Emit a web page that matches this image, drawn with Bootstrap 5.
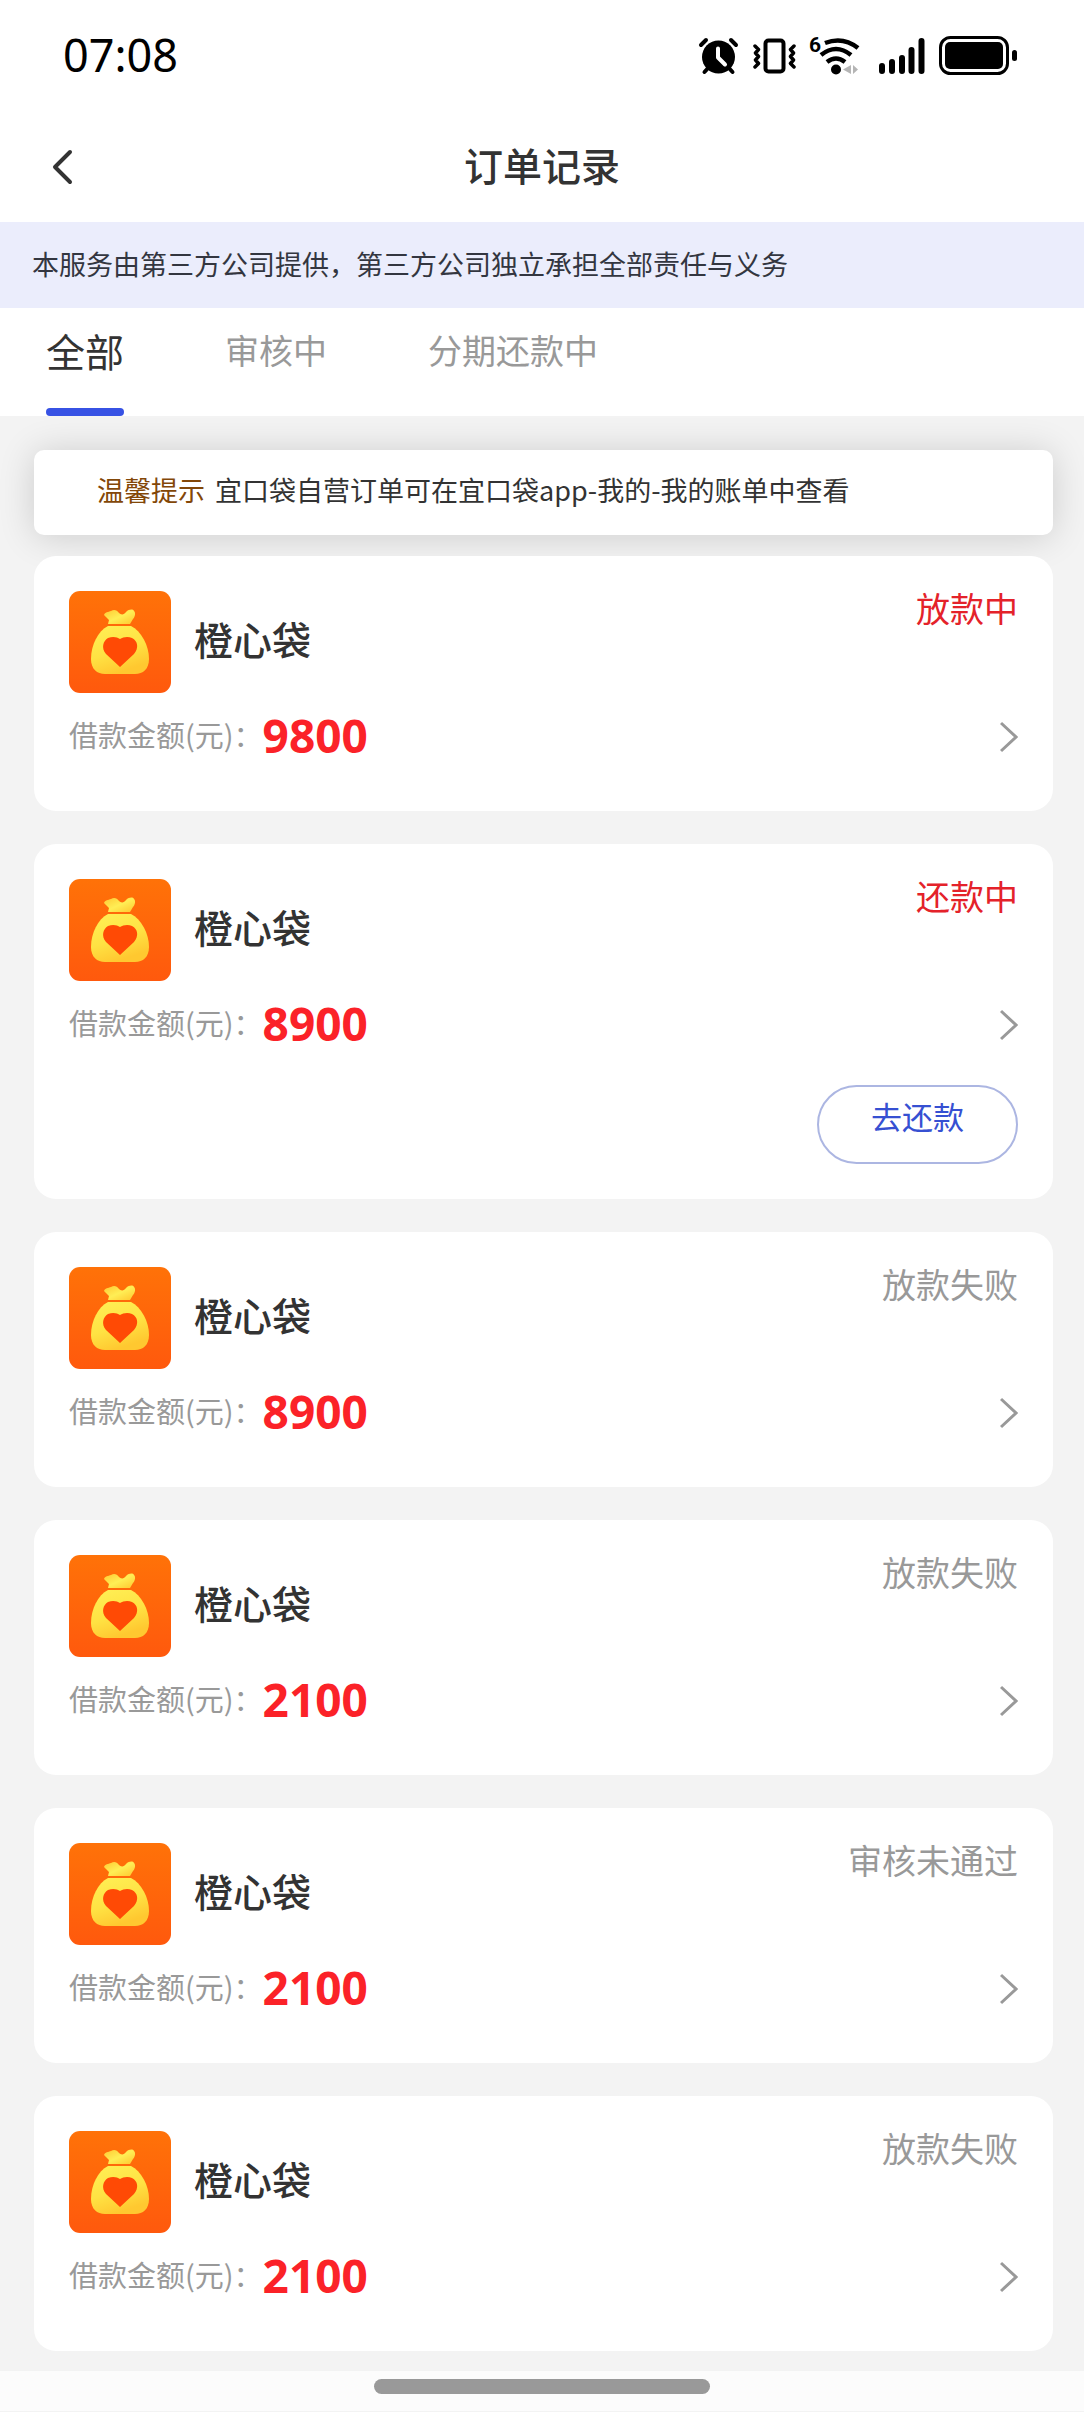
<!DOCTYPE html>
<html lang="zh-CN">
<head>
<meta charset="utf-8">
<meta name="viewport" content="width=device-width, initial-scale=1">
<title>订单记录</title>
<link rel="stylesheet" href="https://cdn.jsdelivr.net/npm/bootstrap@5.3.0/dist/css/bootstrap.min.css">
<style>
  body {
    background: #f3f3f3;
    color: #333;
    font-family: "Noto Sans CJK SC", sans-serif;
    font-size: 27px;
    line-height: 36px;
  }
  .status-bar { height: 112px; padding: 0 67px 2px 63px; color: #000; }
  .status-bar svg { height: 42px; overflow: visible; }
  .status-icons { gap: 12px; }
  .clock { font-family: "Noto Sans", sans-serif; font-size: 45px; line-height: 46px; }
  .title-bar { height: 110px; padding: 0 40px; }
  .title-bar h1 { font-size: 39px; line-height: 52px; font-weight: 500; padding-bottom: 6px; }
  .side-slot { width: 48px; height: 48px; }
  .provider-note { background: #ebedfc; color: #333640; padding: 24px 32px 26px; }
  .order-tabs { height: 108px; padding: 0 46px; gap: 101px; }
  .order-tabs .nav-link {
    padding: 0 0 16px;
    color: #999;
    font-size: 34px;
    line-height: 84px;
    border-bottom: 8px solid transparent;
  }
  .order-tabs .nav-link.active { color: #333; font-size: 39px; position: relative; }
  .order-tabs .nav-link.active::after {
    content: "";
    position: absolute;
    left: 0;
    right: 0;
    bottom: -8px;
    height: 8px;
    border-radius: 4px;
    background: #3752e4;
  }
  .page-body { padding: 34px 31px 20px 34px; }
  .tip-box {
    border-radius: 10px;
    padding: 22px 63px 27px;
    margin-bottom: 21px;
    box-shadow: 0 2px 36px rgba(0, 0, 0, .16);
  }
  .tip-label { color: #834708; margin-right: 10px; }
  .order-list { gap: 33px; }
  .order-card { border: 0; border-radius: 22px; padding: 35px; color: #333; }
  .app-logo { width: 102px; height: 102px; }
  .app-name { font-size: 39px; line-height: 94px; font-weight: 500; margin-left: 23px; }
  .state { font-size: 34px; line-height: 33px; color: #999; }
  .state-live { color: #e4222a; }
  .amount-row { height: 52px; margin-top: 16px; margin-bottom: 15px; }
  .amount-label { font-size: 29px; line-height: 48px; padding-bottom: 2px; color: #999; }
  .amount { font-family: "Noto Sans", sans-serif; font-size: 46px; line-height: 52px; font-weight: 700; color: #fb2228; }
  .detail-link { padding-top: 3px; }
  .detail-link svg { display: block; width: 18px; height: 32px; }
  .pay-row { padding-top: 21px; }
  .btn-pay {
    width: 201px;
    height: 79px;
    padding: 0 0 18px;
    font-size: 31px;
    line-height: 40px;
    color: #3650d2;
    border: 2px solid #acb6e2;
    border-radius: 40px;
  }
  .gesture-area { background: #fcfcfc; height: 40px; padding-top: 8px; }
  .gesture-pill { width: 31%; height: 15px; background: #999; }
</style>
<script src="https://cdn.jsdelivr.net/npm/bootstrap@5.3.0/dist/js/bootstrap.bundle.min.js"></script>
</head>
<body>

<svg width="0" height="0" class="position-absolute" aria-hidden="true">
  <defs>
    <linearGradient id="tile" x1="0" y1="0" x2="0" y2="1">
      <stop offset="0" stop-color="#ff7208"/><stop offset="1" stop-color="#ff590d"/>
    </linearGradient>
    <linearGradient id="sack" x1="0" y1="0" x2=".4" y2="1">
      <stop offset="0" stop-color="#fff056"/><stop offset=".6" stop-color="#ffe243"/><stop offset="1" stop-color="#ffc830"/>
    </linearGradient>
    <linearGradient id="tie" x1="0" y1="0" x2="1" y2="1">
      <stop offset="0" stop-color="#ffc832"/><stop offset=".5" stop-color="#ffee55"/><stop offset="1" stop-color="#ffc62e"/>
    </linearGradient>
  </defs>
  <symbol id="logo" viewBox="0 0 102 102">
    <rect width="102" height="102" rx="11" fill="url(#tile)"/>
    <path d="M39 33 L40 29 L35 24 C36 21 39 21 42 20 C45 18 48 19 50 22 C52 24 55 24 57 21 C60 18 64 18 65 20 C67 22 66 26 64 28 L61 33 Z" fill="url(#tie)"/>
    <path d="M39 35 H62 C72 40 80 54 80 68 C80 78 74 83 66 83 H36 C28 83 22 78 22 68 C22 54 29 40 39 35 Z" fill="url(#sack)"/>
    <path d="M51 76 L37 63 C32 57 34 50 39 47 C44 45 48 46 51 48 C54 46 59 45 63 47 C69 50 70 57 65 63 Z" fill="#ff4a05"/>
  </symbol>
  <symbol id="next" viewBox="0 0 18 32">
    <path d="M1 2 L16 16 L1 30" fill="none" stroke="#999" stroke-width="3"/>
  </symbol>
</svg>

<header class="bg-white">
  <div class="status-bar d-flex align-items-center justify-content-between">
    <span class="clock">07:08</span>
    <div class="status-icons d-flex">
      <svg width="43" viewBox="698 34 43 42" aria-label="闹钟">
        <circle cx="718.500" cy="57" r="16.500"/>
        <path d="M701 45 L706 40 M736 45 L731 40 M704.500 72 L709 67 M732.500 72 L728 67" stroke="#000" stroke-width="4" stroke-linecap="round"/>
        <path d="M718 48.500 V57.500 L725 64.500" fill="none" stroke="#fff" stroke-width="4" stroke-linecap="round" stroke-linejoin="round"/>
      </svg>
      <svg width="44" viewBox="753 34 44 42" aria-label="振动" fill="none" stroke="#000" stroke-linecap="round" stroke-linejoin="round">
        <rect x="765.500" y="40.500" width="18" height="31" rx="3" stroke-width="4"/>
        <path d="M755 46 L758.500 49.500 L755.500 53 L758.500 56.500 L755.500 60 L758.500 63.500 L755 67 M794 46 L790.500 49.500 L793.500 53 L790.500 56.500 L793.500 60 L790.500 63.500 L794 67" stroke-width="3.500"/>
      </svg>
      <svg width="58" viewBox="809 34 58 42" aria-label="无线网络">
        <text x="809" y="52" font-family="Roboto, sans-serif" font-weight="700" font-size="21">6</text>
        <g fill="none" stroke="#000" stroke-width="4.500">
          <path d="M825 43 Q843 36 858 48"/>
          <path d="M821 55 Q836 43 851 55"/>
          <path d="M827 62 Q836 55 845 62"/>
        </g>
        <circle cx="836" cy="69.500" r="5"/>
        <path d="M851 65 V74 L843 69.500 Z M853 65 V74 L858 69.500 Z" fill="#b5b5b5"/>
      </svg>
      <svg width="48" viewBox="879 34 48 42" aria-label="信号" stroke="#000" stroke-width="6" stroke-linecap="round">
        <path d="M882 66 V71 M892 62 V71 M902 58 V71 M911.500 50 V71 M921.500 41 V71"/>
      </svg>
      <svg width="78" viewBox="939 34 78 42" aria-label="电量">
        <rect x="940.500" y="37.500" width="67" height="36" rx="10" fill="none" stroke="#000" stroke-width="3"/>
        <rect x="945" y="42" width="58" height="27" rx="5"/>
        <rect x="1012" y="50" width="5" height="11" rx="2.500"/>
      </svg>
    </div>
  </div>
  <div class="title-bar d-flex align-items-center justify-content-between">
    <button type="button" class="btn border-0 p-0 side-slot d-flex align-items-center" aria-label="返回">
      <svg width="48" height="48" viewBox="0 0 48 48" fill="none" stroke="#333" stroke-width="4" stroke-linecap="round" stroke-linejoin="round"><path d="M30 9 L15 24 L30 39"/></svg>
    </button>
    <h1 class="mb-0">订单记录</h1>
    <span class="side-slot"></span>
  </div>
</header>

<div class="provider-note">本服务由第三方公司提供，第三方公司独立承担全部责任与义务</div>

<nav class="order-tabs nav flex-nowrap align-items-end bg-white" aria-label="订单状态">
  <a class="nav-link active" aria-current="page" href="#">全部</a>
  <a class="nav-link" href="#">审核中</a>
  <a class="nav-link" href="#">分期还款中</a>
</nav>

<main class="page-body">
  <div class="tip-box bg-white"><span class="tip-label">温馨提示</span><span>宜口袋自营订单可在宜口袋app-我的-我的账单中查看</span></div>

  <div class="order-list d-flex flex-column">
    <article class="card order-card">
      <div class="d-flex align-items-start">
        <svg class="app-logo flex-shrink-0" aria-hidden="true"><use href="#logo"/></svg>
        <span class="app-name">橙心袋</span>
        <span class="state state-live ms-auto">放款中</span>
      </div>
      <div class="amount-row d-flex align-items-center">
        <span class="amount-label">借款金额(元)：</span><span class="amount">9800</span>
        <a class="detail-link ms-auto" href="#" aria-label="查看订单"><svg><use href="#next"/></svg></a>
      </div>
    </article>

    <article class="card order-card">
      <div class="d-flex align-items-start">
        <svg class="app-logo flex-shrink-0" aria-hidden="true"><use href="#logo"/></svg>
        <span class="app-name">橙心袋</span>
        <span class="state state-live ms-auto">还款中</span>
      </div>
      <div class="amount-row d-flex align-items-center">
        <span class="amount-label">借款金额(元)：</span><span class="amount">8900</span>
        <a class="detail-link ms-auto" href="#" aria-label="查看订单"><svg><use href="#next"/></svg></a>
      </div>
      <div class="pay-row d-flex justify-content-end">
        <button type="button" class="btn btn-pay">去还款</button>
      </div>
    </article>

    <article class="card order-card">
      <div class="d-flex align-items-start">
        <svg class="app-logo flex-shrink-0" aria-hidden="true"><use href="#logo"/></svg>
        <span class="app-name">橙心袋</span>
        <span class="state ms-auto">放款失败</span>
      </div>
      <div class="amount-row d-flex align-items-center">
        <span class="amount-label">借款金额(元)：</span><span class="amount">8900</span>
        <a class="detail-link ms-auto" href="#" aria-label="查看订单"><svg><use href="#next"/></svg></a>
      </div>
    </article>

    <article class="card order-card">
      <div class="d-flex align-items-start">
        <svg class="app-logo flex-shrink-0" aria-hidden="true"><use href="#logo"/></svg>
        <span class="app-name">橙心袋</span>
        <span class="state ms-auto">放款失败</span>
      </div>
      <div class="amount-row d-flex align-items-center">
        <span class="amount-label">借款金额(元)：</span><span class="amount">2100</span>
        <a class="detail-link ms-auto" href="#" aria-label="查看订单"><svg><use href="#next"/></svg></a>
      </div>
    </article>

    <article class="card order-card">
      <div class="d-flex align-items-start">
        <svg class="app-logo flex-shrink-0" aria-hidden="true"><use href="#logo"/></svg>
        <span class="app-name">橙心袋</span>
        <span class="state ms-auto">审核未通过</span>
      </div>
      <div class="amount-row d-flex align-items-center">
        <span class="amount-label">借款金额(元)：</span><span class="amount">2100</span>
        <a class="detail-link ms-auto" href="#" aria-label="查看订单"><svg><use href="#next"/></svg></a>
      </div>
    </article>

    <article class="card order-card">
      <div class="d-flex align-items-start">
        <svg class="app-logo flex-shrink-0" aria-hidden="true"><use href="#logo"/></svg>
        <span class="app-name">橙心袋</span>
        <span class="state ms-auto">放款失败</span>
      </div>
      <div class="amount-row d-flex align-items-center">
        <span class="amount-label">借款金额(元)：</span><span class="amount">2100</span>
        <a class="detail-link ms-auto" href="#" aria-label="查看订单"><svg><use href="#next"/></svg></a>
      </div>
    </article>
  </div>
</main>

<footer class="gesture-area">
  <div class="gesture-pill rounded-pill mx-auto"></div>
</footer>
</body>
</html>
